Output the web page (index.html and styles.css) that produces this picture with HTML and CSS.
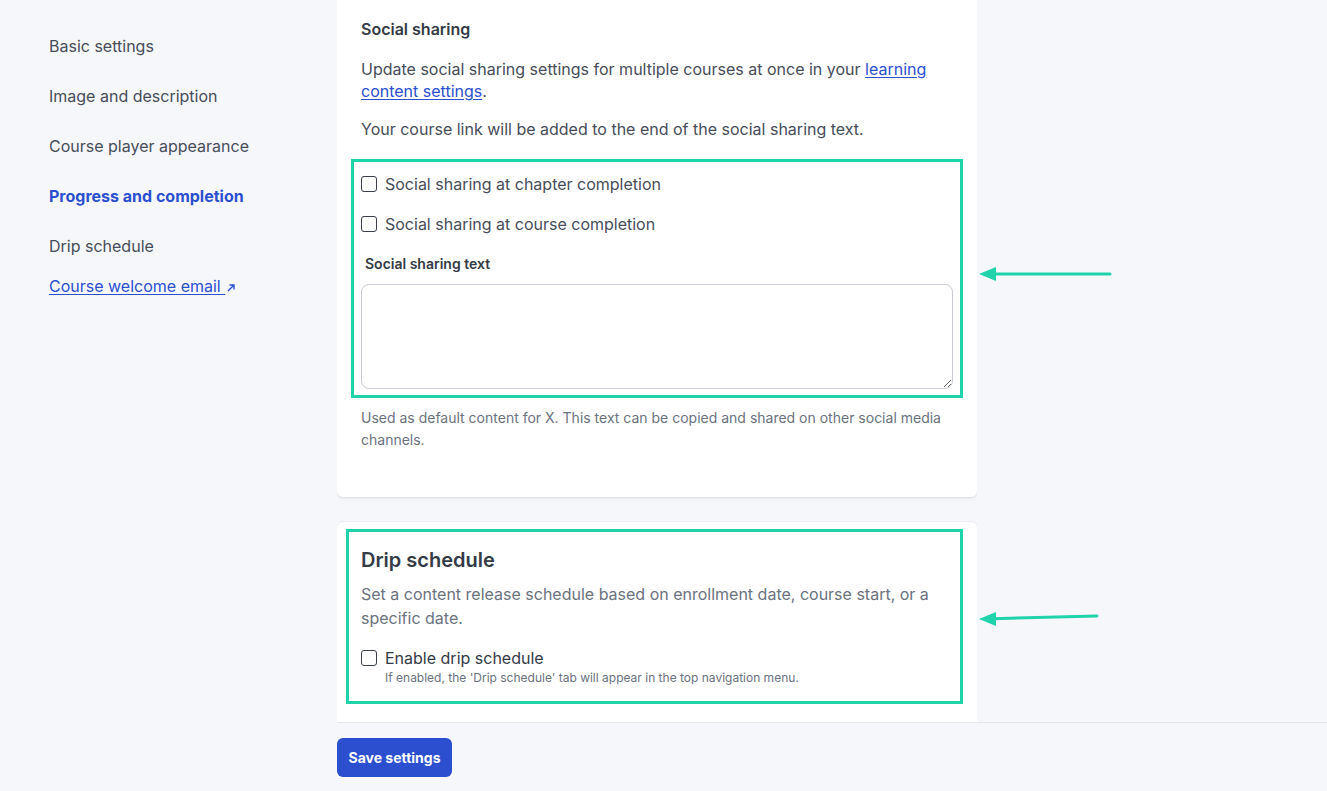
FILE: index.html
```html
<!DOCTYPE html>
<html lang="en">
<head>
<meta charset="UTF-8">
<meta name="viewport" content="width=device-width, initial-scale=1.0">
<title>Course settings</title>
<link rel="stylesheet" href="styles.css">
</head>
<body>
    <div class="layout">
        <nav class="sidebar">
            <a class="nav-item" href="#">Basic settings</a>
            <a class="nav-item" href="#">Image and description</a>
            <a class="nav-item" href="#">Course player appearance</a>
            <a class="nav-item active" href="#">Progress and completion</a>
            <a class="nav-item" href="#">Drip schedule</a>
            <a class="nav-link" href="#">Course welcome email <svg class="ext-icon" width="10" height="10" viewBox="0 0 10 10"><path d="M2 8 L8 2 M3.5 2 H8 V6.5" fill="none" stroke="currentColor" stroke-width="1.4"/></svg></a>
        </nav>

        <div class="main">
            <div class="scroll">
                <section class="card card-social">
                    <h3 class="card-subtitle">Social sharing</h3>
                    <p class="text">Update social sharing settings for multiple courses at once in your <a href="#">learning content settings</a>.</p>
                    <p class="text">Your course link will be added to the end of the social sharing text.</p>

                    <div class="highlight highlight-social">
                        <label class="check-row">
                            <input type="checkbox">
                            <span>Social sharing at chapter completion</span>
                        </label>
                        <label class="check-row">
                            <input type="checkbox">
                            <span>Social sharing at course completion</span>
                        </label>
                        <label class="field-label" for="share-text">Social sharing text</label>
                        <textarea id="share-text"></textarea>
                    </div>
                    <p class="help">Used as default content for X. This text can be copied and shared on other social media channels.</p>
                </section>

                <section class="card card-drip">
                    <div class="highlight highlight-drip">
                        <h2 class="card-title">Drip schedule</h2>
                        <p class="text muted">Set a content release schedule based on enrollment date, course start, or a specific date.</p>
                        <label class="check-row">
                            <input type="checkbox">
                            <span>Enable drip schedule</span>
                        </label>
                        <p class="small-help">If enabled, the 'Drip schedule' tab will appear in the top navigation menu.</p>
                    </div>
                </section>
            </div>

            <footer class="footer">
                <button class="btn-save">Save settings</button>
            </footer>
        </div>
    </div>

    <!-- annotation arrows -->
    <svg class="arrows" width="1327" height="791" viewBox="0 0 1327 791">
        <line x1="1110" y1="274" x2="994" y2="274" stroke="#20d3ab" stroke-width="3" stroke-linecap="round"/>
        <polygon points="979,274 996,267 996,281" fill="#20d3ab"/>
        <line x1="1097" y1="616" x2="994" y2="618.7" stroke="#20d3ab" stroke-width="3" stroke-linecap="round"/>
        <polygon points="979,619 996,612 996,626" fill="#20d3ab"/>
    </svg>
</body>
</html>
```

FILE: styles.css
```css
body {
    margin: 0;
    font-family: Inter, "Noto Sans", Arial, sans-serif;
    background-color: #f6f7fb;
    color: #474d5a;
    overflow: hidden;
}

.layout {
    display: grid;
    grid-template-columns: 337px 1fr;
    height: 100vh;
}

/* sidebar */
.sidebar {
    display: flex;
    flex-direction: column;
    padding: 34px 0 0 49px;
    gap: 26px;
}

.nav-item {
    font-size: 16px;
    line-height: 24px;
    color: #474d5a;
    text-decoration: none;
}

.nav-item.active {
    color: #2b4fcf;
    font-weight: 700;
}

.nav-link {
    margin-top: -10px;
    font-size: 16px;
    line-height: 24px;
    color: #2b4fcf;
    text-decoration: underline;
    text-underline-offset: 2px;
}

.ext-icon {
    margin-left: 1px;
    vertical-align: -1px;
}

/* main column */
.main {
    display: flex;
    flex-direction: column;
    height: 100vh;
    min-width: 0;
}

.scroll {
    flex: 1;
    overflow: hidden;
    width: 640px;
}

.card {
    background-color: #fff;
    border-radius: 6px;
    box-shadow: 0 1px 3px rgba(0, 0, 0, 0.12);
    padding: 24px;
}

.card-social {
    margin-top: -7px;
    padding-bottom: 46px;
    border-top-left-radius: 0;
    border-top-right-radius: 0;
}

.card-drip {
    margin-top: 25px;
    box-shadow: 0 0 0 1px #eceef2;
}

.card-subtitle {
    margin: 0 0 17px;
    font-size: 16px;
    line-height: 24px;
    font-weight: 600;
    color: #343a46;
}

.card-title {
    margin: 0 0 8px;
    font-size: 20px;
    line-height: 28px;
    font-weight: 600;
    color: #343a46;
}

.text {
    margin: 0 0 16px;
    font-size: 16px;
    line-height: 22px;
}

.text a {
    color: #2b4fcf;
    text-underline-offset: 2px;
}

.text.muted {
    color: #6b7280;
    line-height: 24px;
}

/* green annotation frames */
.highlight {
    border: 3px solid #20d3ab;
}

.highlight-social {
    margin: 19px -10px 9px;
    padding: 10px 7px 6px;
    display: flex;
    flex-direction: column;
}

.highlight-drip {
    margin: -17px -10px 0 -15px;
    padding: 14px 7px 15px 12px;
}

.check-row {
    display: flex;
    align-items: center;
    gap: 8px;
    font-size: 16px;
    line-height: 24px;
    color: #474d5a;
    margin-bottom: 16px;
}

.highlight-drip .check-row {
    margin: 0;
    color: #343a46;
}

.check-row input {
    appearance: none;
    -webkit-appearance: none;
    margin: 0;
    width: 16px;
    height: 16px;
    border: 1.5px solid #3a3f4b;
    border-radius: 3px;
    background-color: #fff;
    flex-shrink: 0;
}

.field-label {
    margin: 2px 0 10px 4px;
    font-size: 14px;
    line-height: 20px;
    font-weight: 600;
    color: #343a46;
}

textarea {
    box-sizing: border-box;
    width: 592px;
    height: 105px;
    border: 1px solid #c9ccd2;
    border-radius: 8px;
    font-family: inherit;
    font-size: 14px;
    padding: 8px;
}

.help {
    margin: 0;
    font-size: 14px;
    line-height: 22px;
    color: #6b7280;
}

.small-help {
    margin: 0 0 0 24px;
    font-size: 12px;
    line-height: 16px;
    color: #6b7280;
}

/* footer */
.footer {
    height: 69px;
    box-sizing: border-box;
    border-top: 1px solid #e3e5ea;
    padding-top: 15px;
    background-color: #f6f7fb;
}

.btn-save {
    height: 39px;
    width: 115px;
    background-color: #2b4fcf;
    color: #fff;
    border: none;
    border-radius: 6px;
    font-family: inherit;
    font-size: 14px;
    font-weight: 700;
    cursor: pointer;
}

.btn-save:hover {
    background-color: #2443b8;
}

.arrows {
    position: absolute;
    top: 0;
    left: 0;
    pointer-events: none;
}
```
